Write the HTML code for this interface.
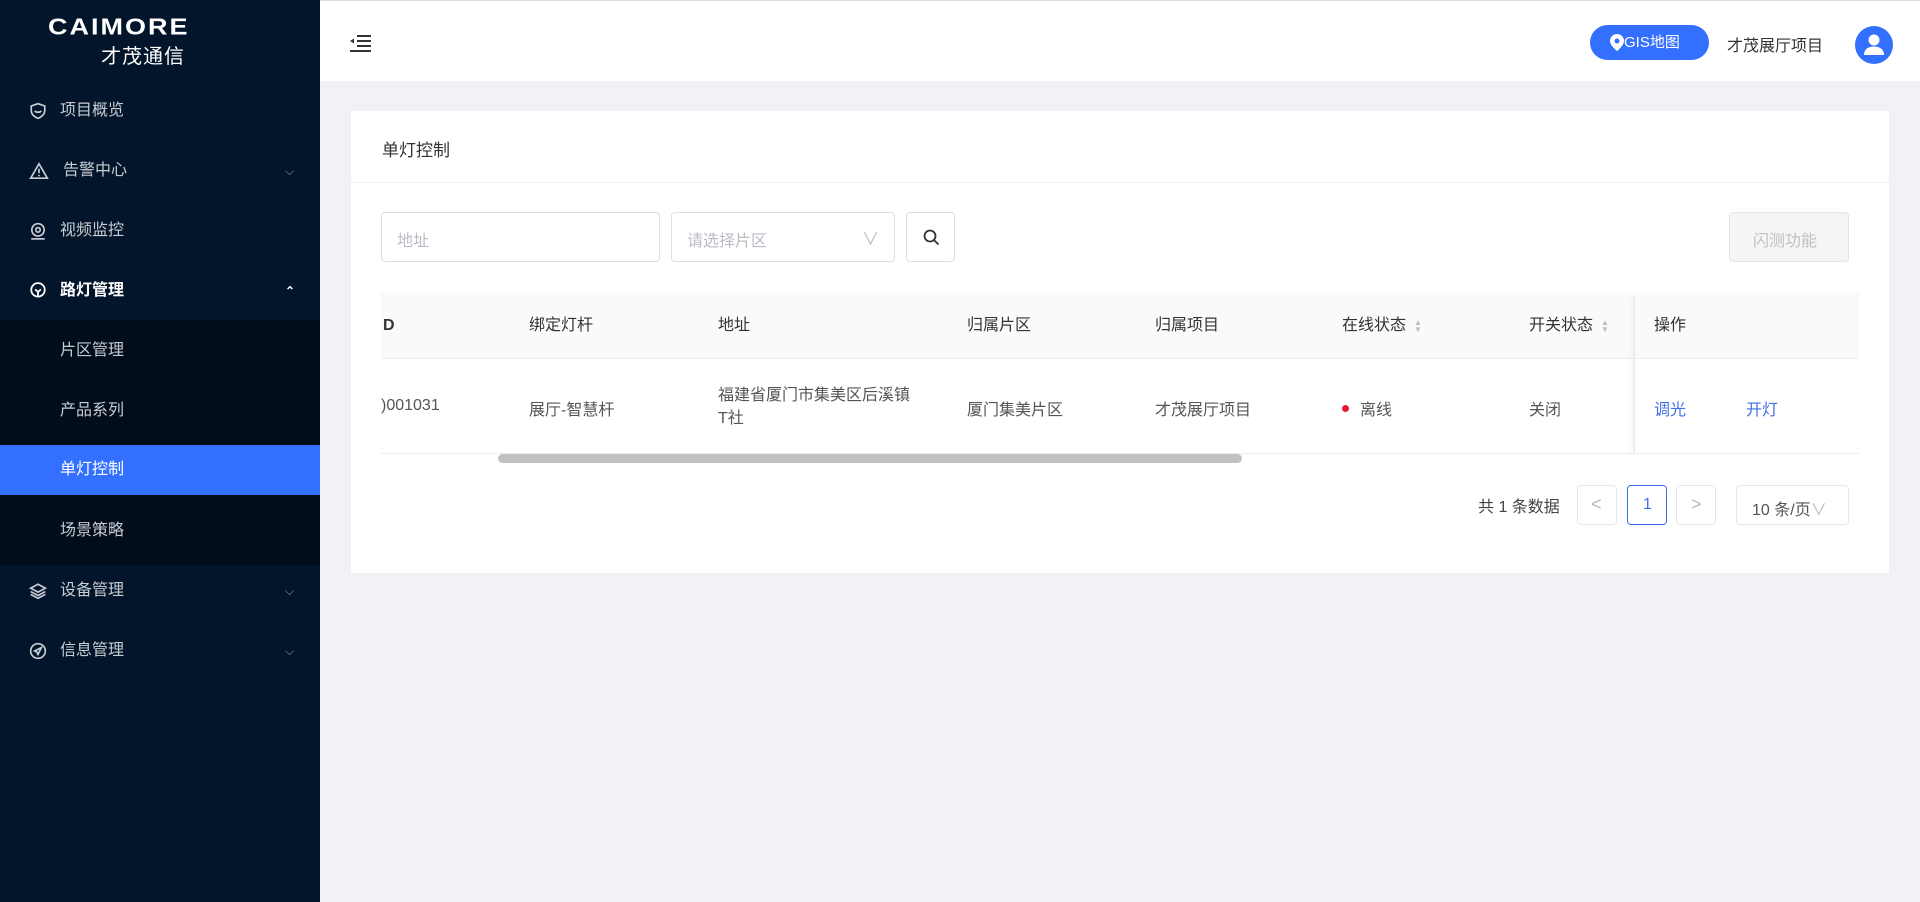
<!DOCTYPE html>
<html><head><meta charset="utf-8"><style>
*{margin:0;padding:0;box-sizing:border-box}
body{width:1920px;height:902px;overflow:hidden;font-family:"Liberation Sans","Noto Sans CJK SC",sans-serif;background:#f0f2f5;position:relative;color:#333}
.side{position:absolute;left:0;top:0;width:320px;height:902px;background:#03152b}
.abs{position:absolute}
.mi{position:absolute;left:0;width:320px;height:50px;line-height:50px;color:#c8ccd3;font-size:16px}
.mi .t{position:absolute;left:60px}
.mi svg.ic{position:absolute;left:29px;top:16px}
.mi .ar{position:absolute;left:285px;top:0;font-size:12px;color:#8a93a0}
.sub{position:absolute;left:0;top:320px;width:320px;height:246px;background:#020d1c}
.hdr{position:absolute;left:320px;top:0;width:1600px;height:81px;background:#fff;border-top:1px solid #ddd}
.card{position:absolute;left:351px;top:111px;width:1538px;height:462px;background:#fff}
.box{position:absolute;border:1px solid #dcdfe6;border-radius:4px;background:#fff}
.th{position:absolute;top:0;font-size:16px;color:#333;line-height:66px}
.td{position:absolute;font-size:16px;color:#555}
.sort{display:inline-block;margin-left:8px;vertical-align:middle;font-size:8px;line-height:7px;color:#bbb}
</style></head><body>
<div class="side">
 <div class="abs" style="left:48px;top:14px;font-size:27px;font-weight:bold;color:#fff;letter-spacing:2px;transform:scaleY(0.85);transform-origin:top left">CAIMORE</div>
 <div class="abs" style="left:101px;top:40px;font-size:20px;color:#fff;letter-spacing:1px">才茂通信</div>
 <div class="sub"></div>
 <div class="mi" style="top:86px"><svg class="ic" width="18" height="18" viewBox="0 0 16 16" fill="none" stroke="#c8ccd3" stroke-width="1.5"><path d="M8 1.5 2 3.5v4c0 3.5 3 6 6 7 3-1 6-3.5 6-7v-4z"/><path d="M5 8c1.5 1.5 4.5 1.5 6 0"/></svg><span class="t">项目概览</span></div>
 <div class="mi" style="top:146px"><svg class="ic" width="20" height="18" viewBox="0 0 18 16" fill="none" stroke="#c8ccd3" stroke-width="1.5"><path d="M9 1.5 1.5 14.5h15z"/><path d="M9 6v4M9 11.5v1.2"/></svg><span class="t" style="left:63px">告警中心</span><span class="ar">⌵</span></div>
 <div class="mi" style="top:206px"><svg class="ic" width="18" height="18" viewBox="0 0 16 16" fill="none" stroke="#c8ccd3" stroke-width="1.5"><circle cx="8" cy="7" r="5.5"/><circle cx="8" cy="7" r="2"/><path d="M2 15h12"/></svg><span class="t">视频监控</span></div>
 <div class="mi" style="top:266px;color:#fff;font-weight:bold"><svg class="ic" width="18" height="18" viewBox="0 0 16 16" fill="none" stroke="#fff" stroke-width="1.6"><circle cx="8" cy="7" r="6"/><path d="M5.5 6.5 8 9l2.5-2.5M8 9v4"/></svg><span class="t">路灯管理</span><span class="ar" style="color:#fff;font-weight:bold">⌃</span></div>
 <div class="mi" style="top:326px"><span class="t">片区管理</span></div>
 <div class="mi" style="top:386px"><span class="t">产品系列</span></div>
 <div class="mi" style="top:445px;background:#3370ff;color:#fff"><span class="t">单灯控制</span></div>
 <div class="mi" style="top:506px"><span class="t">场景策略</span></div>
 <div class="mi" style="top:566px"><svg class="ic" width="18" height="18" viewBox="0 0 16 16" fill="none" stroke="#c8ccd3" stroke-width="1.5"><path d="M8 2 1.5 5.5 8 9l6.5-3.5z"/><path d="M1.5 8.5 8 12l6.5-3.5M1.5 11 8 14.5l6.5-3.5"/></svg><span class="t">设备管理</span><span class="ar">⌵</span></div>
 <div class="mi" style="top:626px"><svg class="ic" width="18" height="18" viewBox="0 0 16 16" fill="none" stroke="#c8ccd3" stroke-width="1.5"><circle cx="8" cy="8" r="6.5"/><path d="M11 5 5 8l2 1 1 2z"/></svg><span class="t">信息管理</span><span class="ar">⌵</span></div>
</div>
<div class="hdr">
 <svg class="abs" style="left:29px;top:33px" width="23" height="18" viewBox="0 0 23 18" fill="none" stroke="#333" stroke-width="2"><path d="M8 2h14M8 7h14M8 12h14M1 17h21"/><path d="M5 4.5 1 7l4 2.5z" fill="#333" stroke="none"/></svg>
 <div class="abs" style="left:1270px;top:24px;width:119px;height:35px;border-radius:18px;background:#3370ff;color:#fff;font-size:15px;line-height:35px;padding-left:34px">GIS地图</div>
 <svg class="abs" style="left:1290px;top:33px" width="14" height="17" viewBox="0 0 14 17"><path d="M7 0a7 7 0 0 0-7 7c0 4.5 7 10 7 10s7-5.5 7-10a7 7 0 0 0-7-7z" fill="#fff"/><circle cx="7" cy="7" r="2.5" fill="#3370ff"/></svg>
 <div class="abs" style="left:1407px;top:31px;font-size:16px;color:#333">才茂展厅项目</div>
 <svg class="abs" style="left:1535px;top:25px" width="38" height="38" viewBox="0 0 38 38"><circle cx="19" cy="19" r="19" fill="#3370ff"/><circle cx="19" cy="14" r="5.5" fill="#fff"/><path d="M9 29c0-6 4.5-8.5 10-8.5S29 23 29 29z" fill="#fff"/></svg>
</div>
<div class="card">
 <div class="abs" style="left:31px;top:25px;font-size:17px;color:#333">单灯控制</div>
 <div class="abs" style="left:0;top:71px;width:1538px;height:1px;background:#eef0f3"></div>
 <div class="box" style="left:30px;top:101px;width:279px;height:50px;"><span class="abs" style="left:15px;top:14px;font-size:16px;color:#b8bcc4">地址</span></div>
 <div class="box" style="left:320px;top:101px;width:224px;height:50px;"><span class="abs" style="left:15px;top:14px;font-size:16px;color:#b8bcc4">请选择片区</span><span class="abs" style="left:190px;top:12px;font-size:17px;color:#b8bcc4">∨</span></div>
 <div class="box" style="left:555px;top:101px;width:49px;height:50px;"><svg class="abs" style="left:16px;top:16px" width="17" height="17" viewBox="0 0 17 17" fill="none" stroke="#333" stroke-width="1.8"><circle cx="7" cy="7" r="5.5"/><path d="M11 11l4.5 4.5"/></svg></div>
 <div class="box" style="left:1378px;top:101px;width:120px;height:50px;background:#f5f5f5;border-color:#e4e4e4"><span class="abs" style="left:23px;top:14px;font-size:16px;color:#c0c0c0">闪测功能</span></div>
 <div class="abs" style="left:30px;top:182px;width:1478px;height:66px;background:#fafafa;border-bottom:1px solid #eee">
  <div class="th" style="left:2px;font-weight:bold">D</div>
  <div class="th" style="left:148px">绑定灯杆</div>
  <div class="th" style="left:337px">地址</div>
  <div class="th" style="left:586px">归属片区</div>
  <div class="th" style="left:774px">归属项目</div>
  <div class="th" style="left:961px">在线状态<span class="sort">▲<br>▼</span></div>
  <div class="th" style="left:1148px">开关状态<span class="sort">▲<br>▼</span></div>
  <div class="th" style="left:1273px">操作</div>
 </div>
 <div class="abs" style="left:1282px;top:185px;width:2px;height:157px;background:#eceef1;box-shadow:-2px 0 4px rgba(0,0,0,.05)"></div>
 <div class="td" style="left:30px;top:286px">)001031</div>
 <div class="td" style="left:178px;top:285px">展厅-智慧杆</div>
 <div class="td" style="left:367px;top:273px;line-height:23px;width:220px">福建省厦门市集美区后溪镇<br>T社</div>
 <div class="td" style="left:616px;top:285px">厦门集美片区</div>
 <div class="td" style="left:804px;top:285px">才茂展厅项目</div>
 <div class="abs" style="left:991px;top:294px;width:7px;height:7px;border-radius:50%;background:#e8192c"></div>
 <div class="td" style="left:1009px;top:285px">离线</div>
 <div class="td" style="left:1178px;top:285px">关闭</div>
 <div class="td" style="left:1303px;top:285px;color:#3f6fe8">调光</div>
 <div class="td" style="left:1395px;top:285px;color:#3f6fe8">开灯</div>
 <div class="abs" style="left:30px;top:342px;width:1478px;height:1px;background:#eee"></div>
 <div class="abs" style="left:147px;top:343px;width:744px;height:9px;border-radius:5px;background:#c1c1c1"></div>
 <div class="abs" style="left:1127px;top:382px;font-size:16px;color:#444">共 1 条数据</div>
 <div class="box" style="left:1226px;top:374px;width:40px;height:40px;border-color:#e4e6ea"><span class="abs" style="left:13px;top:8px;color:#bbb;font-size:18px">&lt;</span></div>
 <div class="box" style="left:1276px;top:374px;width:40px;height:40px;border-color:#3f6fe8"><span class="abs" style="left:15px;top:10px;color:#3f6fe8;font-size:16px">1</span></div>
 <div class="box" style="left:1325px;top:374px;width:40px;height:40px;border-color:#e4e6ea"><span class="abs" style="left:14px;top:8px;color:#bbb;font-size:18px">&gt;</span></div>
 <div class="box" style="left:1385px;top:374px;width:113px;height:40px;border-color:#e4e6ea"><span class="abs" style="left:15px;top:10px;color:#555;font-size:16px">10 条/页<span style="color:#bbb">∨</span></span></div>
</div>
</body></html>
